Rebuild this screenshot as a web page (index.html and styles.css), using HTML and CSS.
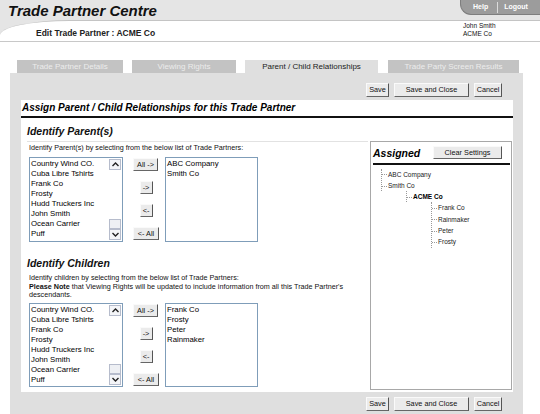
FILE: index.html
```html
<!DOCTYPE html>
<html>
<head>
<meta charset="utf-8">
<title>Trade Partner Centre</title>
<link rel="stylesheet" href="styles.css">
</head>
<body>
<div class="top">
  <div class="brand-row">
    <div class="brand">Trade Partner Centre</div>
    <div class="pill"><span class="pill-item">Help</span><span class="pill-sep"></span><span class="pill-item">Logout</span></div>
  </div>
  <div class="subhead">
    <div class="edit">Edit Trade Partner : ACME Co</div>
    <div class="user">John Smith<br>ACME Co</div>
  </div>
</div>

<div class="tabs">
  <div class="tab w1">Trade Partner Details</div>
  <div class="tab w2">Viewing Rights</div>
  <div class="tab active w3">Parent / Child Relationships</div>
  <div class="tab w4">Trade Party Screen Results</div>
</div>

<div class="panel">
  <div class="actions">
    <button class="btn b-save">Save</button>
    <button class="btn b-saveclose">Save and Close</button>
    <button class="btn b-cancel">Cancel</button>
  </div>

  <div class="content">
    <div class="title">Assign Parent / Child Relationships for this Trade Partner</div>
    <div class="cols">
      <div class="left">
        <h2 class="sect ruled">Identify Parent(s)</h2>
        <p class="hint">Identify Parent(s) by selecting from the below list of Trade Partners:</p>
        <div class="picker tall">
          <div class="listbox src">
            <div class="items">
              <div>Country Wind CO.</div>
              <div>Cuba Libre Tshirts</div>
              <div>Frank Co</div>
              <div>Frosty</div>
              <div>Hudd Truckers Inc</div>
              <div>John Smith</div>
              <div>Ocean Carrier</div>
              <div>Puff</div>
            </div>
            <div class="sbar">
              <div class="sbtn"><svg width="7" height="5" viewBox="0 0 7 5"><path d="M0.5 4 L3.5 1 L6.5 4" fill="none" stroke="#222" stroke-width="1.4"/></svg></div>
              <div class="strack"></div>
              <div class="sthumb"></div>
              <div class="sbtn"><svg width="7" height="5" viewBox="0 0 7 5"><path d="M0.5 1 L3.5 4 L6.5 1" fill="none" stroke="#222" stroke-width="1.4"/></svg></div>
            </div>
          </div>
          <div class="movers">
            <button class="btn mv wide">All -&gt;</button>
            <button class="btn mv narrow">-&gt;</button>
            <button class="btn mv narrow">&lt;-</button>
            <button class="btn mv wide2">&lt;- All</button>
          </div>
          <div class="listbox dst">
            <div class="items">
              <div>ABC Company</div>
              <div>Smith Co</div>
            </div>
          </div>
        </div>

        <h2 class="sect second">Identify Children</h2>
        <p class="hint multi">Identify children by selecting from the below list of Trade Partners:<br><b>Please Note</b> that Viewing Rights will be updated to include information from all this Trade Partner's<br>descendants.</p>
        <div class="picker short">
          <div class="listbox src">
            <div class="items">
              <div>Country Wind CO.</div>
              <div>Cuba Libre Tshirts</div>
              <div>Frank Co</div>
              <div>Frosty</div>
              <div>Hudd Truckers Inc</div>
              <div>John Smith</div>
              <div>Ocean Carrier</div>
              <div>Puff</div>
            </div>
            <div class="sbar">
              <div class="sbtn"><svg width="7" height="5" viewBox="0 0 7 5"><path d="M0.5 4 L3.5 1 L6.5 4" fill="none" stroke="#222" stroke-width="1.4"/></svg></div>
              <div class="strack"></div>
              <div class="sthumb"></div>
              <div class="sbtn"><svg width="7" height="5" viewBox="0 0 7 5"><path d="M0.5 1 L3.5 4 L6.5 1" fill="none" stroke="#222" stroke-width="1.4"/></svg></div>
            </div>
          </div>
          <div class="movers">
            <button class="btn mv wide">All -&gt;</button>
            <button class="btn mv narrow">-&gt;</button>
            <button class="btn mv narrow">&lt;-</button>
            <button class="btn mv wide2">&lt;- All</button>
          </div>
          <div class="listbox dst">
            <div class="items">
              <div>Frank Co</div>
              <div>Frosty</div>
              <div>Peter</div>
              <div>Rainmaker</div>
            </div>
          </div>
        </div>
      </div>

      <div class="assigned">
        <div class="assigned-head">
          <span class="assigned-title">Assigned</span>
          <button class="btn b-clear">Clear Settings</button>
        </div>
        <div class="tree">
          <ul class="lvl l0">
            <li>ABC Company</li>
            <li>Smith Co</li>
          </ul>
          <ul class="lvl l1">
            <li class="self">ACME Co</li>
          </ul>
          <ul class="lvl l2">
            <li>Frank Co</li>
            <li>Rainmaker</li>
            <li>Peter</li>
            <li>Frosty</li>
          </ul>
        </div>
      </div>
    </div>
  </div>

  <div class="actions bottom">
    <button class="btn b-save">Save</button>
    <button class="btn b-saveclose">Save and Close</button>
    <button class="btn b-cancel">Cancel</button>
  </div>
</div>
</body>
</html>
```

FILE: styles.css
```css
* { box-sizing: border-box; }
html, body { margin: 0; padding: 0; background: #fff; }
body {
  font-family: "Liberation Sans", Arial, sans-serif;
  color: #000;
  width: 540px;
  overflow: hidden;
}

/* ---------- header ---------- */
.top { background: #e5e5e5; }
.brand-row {
  display: flex;
  height: 20px;
}
.brand {
  padding: 2px 0 0 8px;
  font-size: 15px;
  line-height: 17px;
  font-weight: bold;
  font-style: italic;
  color: #111;
}
.pill {
  margin-left: auto;
  width: 80px;
  height: 15px;
  background: #9c9c9c;
  border: 1px solid #7e7e7e;
  border-top: 0;
  border-right: 0;
  border-bottom-left-radius: 11px;
  display: flex;
  align-items: center;
  padding-left: 12px;
}
.pill-item {
  color: #fff;
  font-size: 7px;
  font-weight: bold;
  line-height: 14px;
}
.pill-sep {
  width: 1px;
  height: 11px;
  background: #dcdcdc;
  margin: 0 6px 0 9px;
}
.subhead {
  background: #fff;
  height: 22px;
  border-top: 1px solid #c4c4c4;
  border-bottom: 1px solid #c8c8c8;
  border-top-left-radius: 70px 15px;
  display: flex;
}
.edit {
  padding: 7px 0 0 36px;
  font-size: 8.5px;
  line-height: 10px;
  font-weight: bold;
  color: #222;
}
.user {
  margin-left: auto;
  width: 77px;
  font-size: 6.5px;
  line-height: 8.5px;
  padding-top: 0.5px;
  color: #111;
}

/* ---------- tabs ---------- */
.tabs {
  display: flex;
  gap: 9px;
  margin-top: 18px;
  padding-left: 17px;
}
.tab {
  height: 13px;
  line-height: 13px;
  font-size: 8px;
  text-align: center;
  background: #c3c3c3;
  color: #ececec;
  white-space: nowrap;
}
.tab.active { background: #dfdfdf; color: #222; }
.w1 { width: 106px; }
.w2 { width: 104px; }
.w3 { width: 133px; }
.w4 { width: 131px; margin-left: 1px; }

/* ---------- panel ---------- */
.panel {
  margin-left: 10px;
  width: 513px;
  background: #dfdfdf;
  padding: 10px 0 12px;
}
.actions {
  display: flex;
  justify-content: flex-end;
  gap: 5px;
  padding-right: 21px;
  height: 14px;
}
.actions.bottom { margin-top: 5px; }

.btn {
  font-family: "Liberation Sans", Arial, sans-serif;
  font-size: 7.3px;
  color: #111;
  background: #ebebeb;
  border: 1px solid;
  border-color: #fafafa #555 #666 #fafafa;
  padding: 0;
  margin: 0;
  height: 14px;
  line-height: 12px;
  text-align: center;
  white-space: nowrap;
}
.b-save { width: 23px; }
.b-saveclose { width: 75px; }
.b-cancel { width: 28px; }

.content {
  margin: 3px 10px 0 11px;
  background: #fff;
  height: 292px;
}
.title {
  height: 18px;
  line-height: 16px;
  padding-left: 1px;
  border-bottom: 2px solid #111;
  font-size: 10px;
  font-weight: bold;
  font-style: italic;
  white-space: nowrap;
}
.cols { display: flex; }
.left {
  width: 347px;
  padding-left: 6px;
}

.sect {
  margin: 0;
  font-size: 10.5px;
  line-height: 14px;
  font-weight: bold;
  font-style: italic;
  color: #111;
}
.sect.ruled {
  margin-top: 6px;
  padding-bottom: 3px;
  border-bottom: 1px solid #e2e2e2;
}
.sect.second { margin-top: 14px; }

.hint {
  margin: 2px 0 0 2px;
  font-size: 7.2px;
  line-height: 8px;
  color: #111;
  white-space: nowrap;
}
.hint.multi {
  margin-top: 4px;
  line-height: 8.5px;
}

.picker {
  display: flex;
  margin: 5px 0 0 2px;
  height: 85px;
}
.picker.short { margin-top: 3.5px; height: 84px; }

.listbox {
  border: 1px solid #7f9db9;
  background: #fff;
  display: flex;
  height: 100%;
}
.listbox.src { width: 94px; }
.listbox.dst { width: 93px; margin-left: 6px; }
.items {
  flex: 1;
  padding: 1px 0 0 1px;
  font-size: 7.8px;
  line-height: 10px;
  white-space: nowrap;
  overflow: hidden;
}
.sbar {
  width: 13px;
  display: flex;
  flex-direction: column;
  padding: 1px 1px 1px 0;
}
.sbtn {
  height: 11px;
  border: 1px solid #b6bccc;
  background: #f4f5f8;
  display: flex;
  align-items: center;
  justify-content: center;
}
.strack { flex: 1; background: #fff; }
.sthumb {
  height: 10px;
  border: 1px solid #b6bccc;
  background: #eef0f4;
}

.movers {
  width: 26px;
  margin-left: 10px;
  display: flex;
  flex-direction: column;
  align-items: center;
  gap: 10px;
  padding-top: 1px;
}
.btn.mv { height: 13px; line-height: 11px; }
.btn.wide { width: 25px; margin-right: 1px; }
.btn.wide2 { width: 26px; }
.btn.narrow { width: 13px; }

/* ---------- assigned ---------- */
.assigned {
  margin: 23px 0 0 2px;
  width: 142px;
  height: 249px;
  border: 1px solid #a8a8a8;
}
.assigned-head {
  margin: 0 1px 0 2px;
  padding: 4px 8px 4px 0;
  border-bottom: 2px solid #111;
  display: flex;
  align-items: flex-end;
  justify-content: space-between;
}
.assigned-title {
  font-size: 10.5px;
  line-height: 12px;
  font-weight: bold;
  font-style: italic;
}
.btn.b-clear { width: 69px; height: 13px; line-height: 11px; }

.tree {
  padding-top: 3.5px;
  font-size: 6.5px;
  color: #222;
}
.lvl {
  list-style: none;
  margin: 0;
  padding: 0;
  border-left: 1px dotted #9a9a9a;
}
.lvl li {
  line-height: 11.3px;
  white-space: nowrap;
}
.lvl li::before {
  content: "";
  display: inline-block;
  width: 5px;
  margin-right: 1px;
  border-top: 1px dotted #9a9a9a;
  vertical-align: middle;
}
.l0 { margin-left: 10px; }
.l1 { margin-left: 35px; }
.l2 { margin-left: 60px; }
.self { font-weight: bold; color: #000; }
```
